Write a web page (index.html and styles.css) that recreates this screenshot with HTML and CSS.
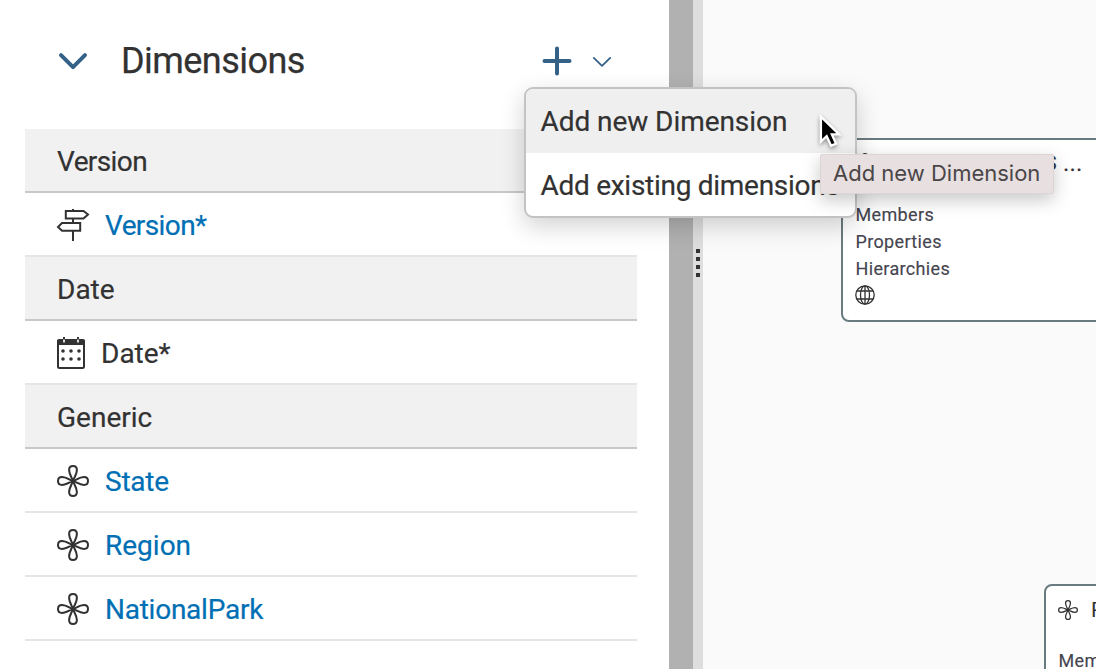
FILE: index.html
```html
<!DOCTYPE html>
<html lang="en">
<head>
<meta charset="utf-8">
<title>Dimensions</title>
<link rel="stylesheet" href="styles.css">
</head>
<body>
<svg class="defs" aria-hidden="true">
  <symbol id="flower" viewBox="0 0 32 32">
    <g fill="none" stroke="currentColor" stroke-width="2" stroke-linejoin="round">
      <path d="M16 16C15 13 12.100 9 12.100 5C12.100 2.400 13.500 1 16 1S19.900 2.400 19.900 5C19.900 9 17 13 16 16Z"/>
      <path d="M16 16C15 19 12.100 23 12.100 27C12.100 29.600 13.500 31 16 31S19.900 29.600 19.900 27C19.900 23 17 19 16 16Z"/>
      <path d="M16 16C13 15 9 12.100 5 12.100C2.400 12.100 1 13.500 1 16S2.400 19.900 5 19.900C9 19.900 13 17 16 16Z"/>
      <path d="M16 16C19 15 23 12.100 27 12.100C29.600 12.100 31 13.500 31 16S29.600 19.900 27 19.900C23 19.900 19 17 16 16Z"/>
    </g>
  </symbol>
</svg>
<div class="app">
  <aside class="panel">
    <header class="head">
      <svg class="toggle" viewBox="0 0 28 17"><path d="M2 2.2L14 14.2L26 2.2"/></svg>
      <h1 class="title">Dimensions</h1>
      <svg class="plus" viewBox="0 0 28 28"><path d="M14 1.5V26.5M1.5 14H26.5"/></svg>
      <svg class="more" viewBox="0 0 18 10"><path d="M.8 .9L9 8.8L17.2 .9"/></svg>
    </header>
    <div class="list">
      <div class="group"><span class="tight">Version</span></div>
      <div class="item">
        <svg class="icon" viewBox="0 0 32 32"><path class="line" d="M16 0V2M16 10V14M16 22V32M8.800 2H26.500L31 5.500L26.500 9.500H8.800ZM23.200 14H5L1 18L5 21.800H23.200Z"/></svg>
        <span class="link tight">Version*</span>
      </div>
      <div class="group"><span>Date</span></div>
      <div class="item">
        <svg class="icon calendar" viewBox="0 0 28 32"><path class="line" d="M1 3V29.500Q1 31 2.500 31H25.500Q27 31 27 29.500V3"/><path class="solid" d="M0 4Q0 2 2 2H6V0H8V2H20V0H22V2H26Q28 2 28 4V8H0Z"/><path class="holes" d="M6.200 2.500H7.800V5.500H6.200ZM20.200 2.500H21.800V5.500H20.200Z"/><path class="marks" d="M6 14h0M14 14h0M22 14h0M6 22h0M14 22h0M22 22h0"/></svg>
        <span>Date*</span>
      </div>
      <div class="group"><span>Generic</span></div>
      <div class="item"><svg class="icon"><use href="#flower"/></svg><span class="link snug">State</span></div>
      <div class="item"><svg class="icon"><use href="#flower"/></svg><span class="link">Region</span></div>
      <div class="item"><svg class="icon"><use href="#flower"/></svg><span class="link snug">NationalPark</span></div>
    </div>
  </aside>
  <div class="gutter"></div>
  <div class="splitter"><i></i><i></i><i></i><i></i></div>
  <main class="canvas">
    <section class="node node-main">
      <div class="node-head"><svg class="small-icon"><use href="#flower"/></svg><span class="node-title">NationalParkVisitS</span><span class="dots">...</span></div>
      <div class="node-row">Members</div>
      <div class="node-row">Properties</div>
      <div class="node-row">Hierarchies</div>
      <svg class="globe" viewBox="0 0 20 20"><circle cx="10" cy="10" r="9.200"/><ellipse cx="10" cy="10" rx="4.500" ry="9.200"/><path d="M10 1V19M2 6H18M2 14H18"/></svg>
    </section>
    <section class="node node-region">
      <div class="node-head"><svg class="small-icon"><use href="#flower"/></svg><span class="node-title">Region</span></div>
      <div class="node-row">Members</div>
    </section>
  </main>
</div>
<div class="menu">
  <div class="option selected"><span class="t-new">Add new Dimension</span></div>
  <div class="option"><span class="t-existing">Add existing dimensions</span></div>
</div>
<div class="tooltip">Add new Dimension</div>
<svg class="cursor" viewBox="0 0 24 34"><path d="M2 2V28L8 22.500L12.600 32.500L17.800 30.200L13.400 20.500H21Z"/></svg>
</body>
</html>
```
FILE: styles.css
```css
* { box-sizing: border-box; }
body { margin: 0; font-family: Roboto, sans-serif; color: #323232; overflow: hidden; }
svg { display: block; flex: none; overflow: visible; }
.defs { position: absolute; width: 0; height: 0; }
.app { display: flex; width: 1096px; height: 669px; overflow: hidden; }
.panel { width: 669px; padding: 0 32px 0 25px; background: #fff; }
.head { display: flex; align-items: center; height: 129px; padding: 0 26px 7px 34px; }
.toggle, .plus, .more { fill: none; stroke: #346187; stroke-linecap: round; stroke-linejoin: round; }
.toggle { width: 28px; height: 17px; stroke-width: 4; }
.title { margin: 0 auto 0 34px; font-size: 36px; font-weight: 400; line-height: 44px; letter-spacing: -.55px; -webkit-text-stroke: .25px; }
.plus { width: 28px; height: 28px; stroke-width: 4; }
.more { width: 18px; height: 10px; margin: 1px 0 0 22px; stroke-width: 1.8; }
.list { font-size: 28px; -webkit-text-stroke: .2px; }
.group, .item { display: flex; align-items: center; height: 64px; padding: 2px 32px 0; white-space: nowrap; }
.group { background: #f1f1f1; border-bottom: 2px solid #c8c8c8; }
.item { gap: 16px; border-bottom: 2px solid #e5e5e5; }
.tight { letter-spacing: -.6px; }
.snug { letter-spacing: -.25px; }
.icon { width: 32px; height: 32px; color: #323232; }
.calendar { width: 28px; }
.line { fill: none; stroke: #323232; stroke-width: 2; }
.solid { fill: #323232; }
.holes { fill: #fff; }
.marks { fill: none; stroke: #323232; stroke-width: 3.6; stroke-linecap: round; }
.link { color: #006fb4; }
.gutter { width: 24px; background: #b1b1b1; }
.splitter { display: flex; flex-direction: column; gap: 4px; width: 10px; padding: 249px 0 0 3px; background: #dedede; }
.splitter i { width: 4px; height: 4px; background: #333; }
.canvas { position: relative; flex: 1; background: #fafafa; }
.node { position: absolute; width: 400px; border: 2px solid #6a7b80; border-radius: 8px; background: #fff; color: #45454f; font-size: 18px; }
.node-main { left: 138px; top: 138px; height: 184px; padding: 0 12px; }
.node-region { left: 341px; top: 584px; height: 184px; padding: 0 12px; }
.node-head { display: flex; align-items: center; height: 48px; margin-bottom: 13px; color: #323232; font-size: 20px; }
.node-main .node-head { height: 46px; margin-bottom: 15px; }
.small-icon { width: 20px; height: 20px; margin-right: 13px; }
.node-title { font-size: 21px; letter-spacing: -.35px; }
.dots { margin-left: 7px; font-size: 22px; letter-spacing: .7px; -webkit-text-stroke: .4px; }
.node-row { height: 27px; padding-left: .5px; line-height: 27px; letter-spacing: .35px; -webkit-text-stroke: .15px; }
.globe { width: 20px; height: 20px; margin-top: 3px; fill: none; stroke: #323232; stroke-width: 1.3; }
.menu { position: absolute; left: 524px; top: 87px; width: 333px; height: 131px; border: 2px solid #c3c3c3; border-radius: 9px; overflow: hidden; background: #fff; box-shadow: 0 8px 24px rgba(0,0,0,.18); }
.option { display: flex; align-items: center; height: 64px; padding: 0 14.5px; font-size: 28px; white-space: nowrap; -webkit-text-stroke: .2px; }
.selected { background: #efefef; }
.t-new { letter-spacing: -.06px; }
.t-existing { letter-spacing: -.28px; }
.tooltip { position: absolute; left: 820px; top: 154px; width: 234px; height: 40px; padding-left: 12px; line-height: 37px; font-family: Inter, sans-serif; font-size: 22px; color: #4a4647; background: #e8dfe0; border: 1px solid #ddd4d5; border-radius: 2px; box-shadow: 0 6px 18px rgba(0,0,0,.22); white-space: nowrap; }
.cursor { position: absolute; left: 819px; top: 114px; width: 23px; height: 34px; filter: drop-shadow(0 2px 2px rgba(0,0,0,.4)); }
.cursor path { fill: #000; stroke: #fff; stroke-width: 2.4; }
```
